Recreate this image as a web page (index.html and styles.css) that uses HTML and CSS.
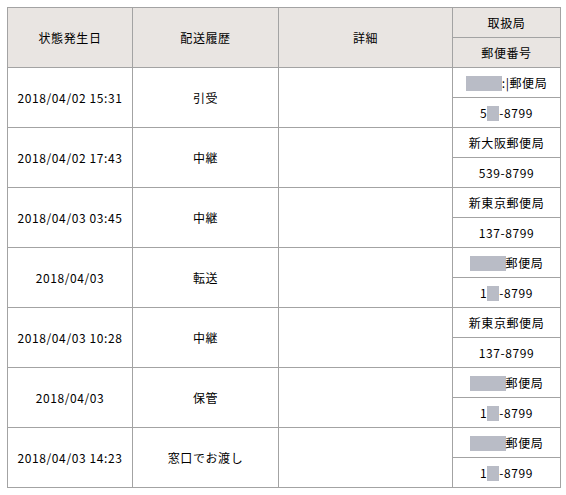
FILE: index.html
```html
<!DOCTYPE html>
<html lang="ja">
<head>
<meta charset="utf-8">
<link rel="stylesheet" href="styles.css">
</head>
<body>
<div class="wrap">
<table class="hist">
  <colgroup>
    <col class="c1"><col class="c2"><col class="c3"><col class="c4">
  </colgroup>
  <thead>
    <tr class="half"><th rowspan="2">状態発生日</th><th rowspan="2">配送履歴</th><th rowspan="2">詳細</th><th>取扱局</th></tr>
    <tr class="half"><th>郵便番号</th></tr>
  </thead>
  <tbody>
    <tr class="half"><td rowspan="2">2018/04/02 15:31</td><td rowspan="2">引受</td><td rowspan="2"></td><td><span class="mask m1"></span>:|郵便局</td></tr>
    <tr class="half"><td>5<span class="mask m2"></span>-8799</td></tr>
    <tr class="half"><td rowspan="2">2018/04/02 17:43</td><td rowspan="2">中継</td><td rowspan="2"></td><td>新大阪郵便局</td></tr>
    <tr class="half"><td>539-8799</td></tr>
    <tr class="half"><td rowspan="2">2018/04/03 03:45</td><td rowspan="2">中継</td><td rowspan="2"></td><td>新東京郵便局</td></tr>
    <tr class="half"><td>137-8799</td></tr>
    <tr class="half"><td rowspan="2">2018/04/03</td><td rowspan="2">転送</td><td rowspan="2"></td><td><span class="mask m3"></span>郵便局</td></tr>
    <tr class="half"><td>1<span class="mask m2"></span>-8799</td></tr>
    <tr class="half"><td rowspan="2">2018/04/03 10:28</td><td rowspan="2">中継</td><td rowspan="2"></td><td>新東京郵便局</td></tr>
    <tr class="half"><td>137-8799</td></tr>
    <tr class="half"><td rowspan="2">2018/04/03</td><td rowspan="2">保管</td><td rowspan="2"></td><td><span class="mask m3"></span>郵便局</td></tr>
    <tr class="half"><td>1<span class="mask m2"></span>-8799</td></tr>
    <tr class="half"><td rowspan="2">2018/04/03 14:23</td><td rowspan="2">窓口でお渡し</td><td rowspan="2"></td><td><span class="mask m3"></span>郵便局</td></tr>
    <tr class="half"><td>1<span class="mask m2"></span>-8799</td></tr>
  </tbody>
</table>
</div>
</body>
</html>
```
FILE: styles.css
```css
html, body {
  margin: 0;
  padding: 0;
  background: #fff;
}
.wrap {
  padding: 7px 0 0 7px;
}
.hist {
  border-collapse: collapse;
  table-layout: fixed;
  width: 553px;
  font-family: "Noto Sans CJK JP", "DejaVu Sans", sans-serif;
  font-size: 12px;
  letter-spacing: 0.6px;
  color: #000;
}
.c1 { width: 125px; }
.c2 { width: 146px; }
.c3 { width: 174px; }
.c4 { width: 108px; }
.hist th, .hist td {
  border: 1px solid #a3a3a3;
  text-align: center;
  vertical-align: middle;
  padding: 0;
  font-weight: normal;
  line-height: 16px;
}
.hist th {
  background: #e9e5e2;
}
.half {
  height: 30px;
}
.mask {
  display: inline-block;
  background: #b9bcc6;
  height: 15px;
  vertical-align: -3px;
}
.m1 { width: 36px; }
.m2 { width: 12px; }
.m3 { width: 36px; }
```
